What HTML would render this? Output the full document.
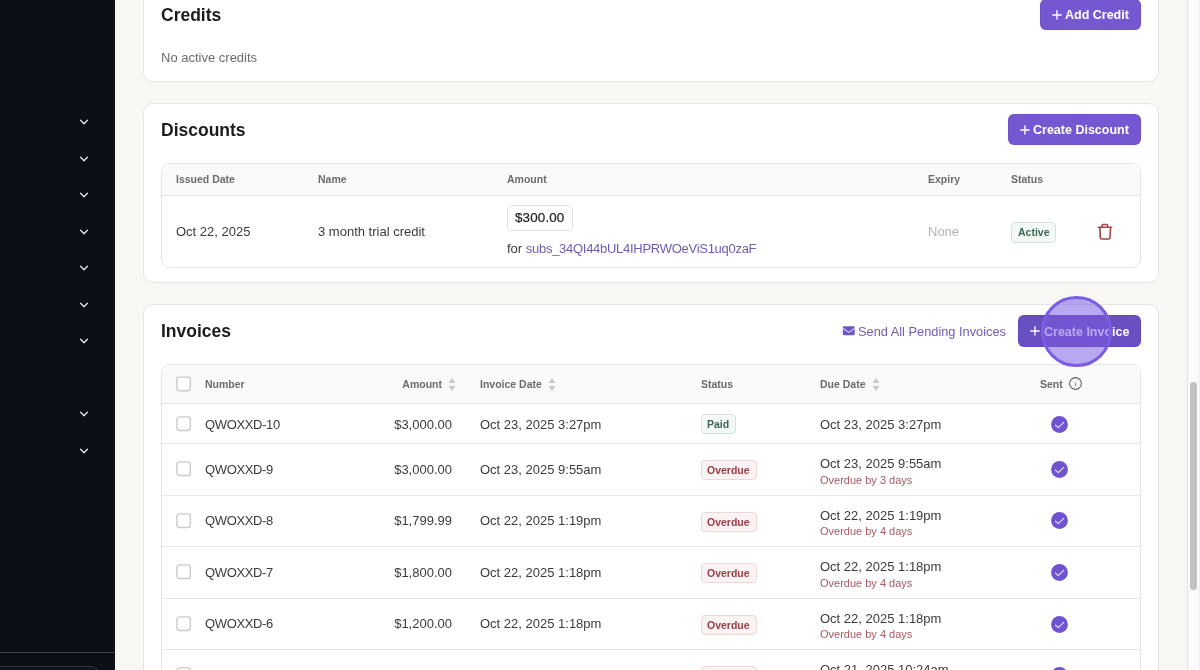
<!DOCTYPE html><html><head><meta charset="utf-8"><style>
*{box-sizing:border-box;margin:0;padding:0}
html,body{width:1200px;height:670px;overflow:hidden}
body{background:#f8f7f3;font-family:"Liberation Sans",sans-serif;position:relative}
#L{position:absolute;left:0;top:0;width:1200px;height:670px;will-change:transform}
.a{position:absolute}
.t{position:absolute;white-space:nowrap;line-height:20px}
.r13{font-size:13px;color:#3b3b3b}
.h{font-size:10.5px;font-weight:bold;color:#6b6b6b}
.ttl{font-size:17.5px;font-weight:bold;color:#1c1c1e}
.bt{font-size:12.5px;font-weight:bold;color:#fff}
.s11{font-size:11px;color:#a85a62}
.bd{font-size:10.5px;font-weight:bold}
.card{position:absolute;left:143px;width:1016px;background:#fff;border:1px solid #e6e5e1;border-radius:10px}
.tbl{position:absolute;left:161px;width:980px;border:1px solid #e5e5e5;border-radius:9px;overflow:hidden;background:#fff}
.btn{position:absolute;height:31px;background:#7558d1;border-radius:6px;box-shadow:inset 0 0 0 1px rgba(60,30,120,.1)}
.plus{position:absolute;width:9.4px;height:9.4px;margin:0.2px 0 0 0.4px}
.plus:before{content:"";position:absolute;left:3.95px;top:0;width:1.5px;height:9.4px;background:#fff}
.plus:after{content:"";position:absolute;left:0;top:3.95px;width:9.4px;height:1.5px;background:#fff}
.hl{position:absolute;height:1px;background:#e8e8e8}
.cb{position:absolute;left:176px;width:14.6px;height:14.6px;margin:-0.4px 0 0 0;border:1.5px solid #cbcbcb;border-radius:3px;background:#fff}
.badge{position:absolute;height:20.4px;border-radius:4px}
.green{background:#f2f9f6;border:1px solid #d8e1dc}
.red{background:#fbf3f3;border:1px solid #e9d9d9}
.gt{color:#3b6651}
.rt{color:#973f48}
.chev{position:absolute;left:79px;width:10px;height:6px}
</style></head><body><div id="L">
<div class="a" style="left:0;top:0;width:115px;height:670px;background:#0b0f17"></div>
<svg class="a" style="left:78px;top:118px" width="12" height="8" viewBox="0 0 12 8"><path d="M2.6 2.3 L6 5.7 L9.4 2.3" fill="none" stroke="#e8e8e8" stroke-width="1.3" stroke-linecap="round" stroke-linejoin="round"/></svg>
<svg class="a" style="left:78px;top:154.5px" width="12" height="8" viewBox="0 0 12 8"><path d="M2.6 2.3 L6 5.7 L9.4 2.3" fill="none" stroke="#e8e8e8" stroke-width="1.3" stroke-linecap="round" stroke-linejoin="round"/></svg>
<svg class="a" style="left:78px;top:191px" width="12" height="8" viewBox="0 0 12 8"><path d="M2.6 2.3 L6 5.7 L9.4 2.3" fill="none" stroke="#e8e8e8" stroke-width="1.3" stroke-linecap="round" stroke-linejoin="round"/></svg>
<svg class="a" style="left:78px;top:227.5px" width="12" height="8" viewBox="0 0 12 8"><path d="M2.6 2.3 L6 5.7 L9.4 2.3" fill="none" stroke="#e8e8e8" stroke-width="1.3" stroke-linecap="round" stroke-linejoin="round"/></svg>
<svg class="a" style="left:78px;top:264px" width="12" height="8" viewBox="0 0 12 8"><path d="M2.6 2.3 L6 5.7 L9.4 2.3" fill="none" stroke="#e8e8e8" stroke-width="1.3" stroke-linecap="round" stroke-linejoin="round"/></svg>
<svg class="a" style="left:78px;top:300.5px" width="12" height="8" viewBox="0 0 12 8"><path d="M2.6 2.3 L6 5.7 L9.4 2.3" fill="none" stroke="#e8e8e8" stroke-width="1.3" stroke-linecap="round" stroke-linejoin="round"/></svg>
<svg class="a" style="left:78px;top:337px" width="12" height="8" viewBox="0 0 12 8"><path d="M2.6 2.3 L6 5.7 L9.4 2.3" fill="none" stroke="#e8e8e8" stroke-width="1.3" stroke-linecap="round" stroke-linejoin="round"/></svg>
<svg class="a" style="left:78px;top:410px" width="12" height="8" viewBox="0 0 12 8"><path d="M2.6 2.3 L6 5.7 L9.4 2.3" fill="none" stroke="#e8e8e8" stroke-width="1.3" stroke-linecap="round" stroke-linejoin="round"/></svg>
<svg class="a" style="left:78px;top:446.5px" width="12" height="8" viewBox="0 0 12 8"><path d="M2.6 2.3 L6 5.7 L9.4 2.3" fill="none" stroke="#e8e8e8" stroke-width="1.3" stroke-linecap="round" stroke-linejoin="round"/></svg>
<div class="a" style="left:111px;top:0;width:4px;height:670px;background:#0f1013"></div>
<div class="a" style="left:0;top:652px;width:115px;height:1px;background:#3b3e46"></div>
<div class="a" style="left:-20px;top:666px;width:119px;height:30px;border:1px solid #33363e;border-radius:8px;background:#10131a"></div>
<div class="card" style="top:-40px;height:122px"></div>
<div class="t ttl" style="left:161px;top:5px;">Credits</div>
<div class="btn" style="left:1040px;top:-1px;width:101px"></div>
<svg class="a" style="left:1052px;top:10px" width="10" height="10" viewBox="0 0 10 10"><path d="M4.95 0.3 V9.6 M0.3 4.95 H9.6" stroke="#fff" stroke-width="1.35"/></svg>
<div class="t bt" style="left:1065px;top:5px;">Add Credit</div>
<div class="t r13" style="left:161px;top:48px;color:#6b6b6b">No active credits</div>
<div class="card" style="top:103px;height:180px"></div>
<div class="t ttl" style="left:161px;top:120px;">Discounts</div>
<div class="btn" style="left:1008px;top:114px;width:133px"></div>
<svg class="a" style="left:1020px;top:125px" width="10" height="10" viewBox="0 0 10 10"><path d="M4.95 0.3 V9.6 M0.3 4.95 H9.6" stroke="#fff" stroke-width="1.35"/></svg>
<div class="t bt" style="left:1033px;top:120px;">Create Discount</div>
<div class="tbl" style="top:163px;height:105px"><div class="a" style="left:0;top:0;width:100%;height:32px;background:#fafafa;border-bottom:1px solid #e8e8e8"></div></div>
<div class="t h" style="left:176px;top:169px;">Issued Date</div>
<div class="t h" style="left:318px;top:169px;">Name</div>
<div class="t h" style="left:507px;top:169px;">Amount</div>
<div class="t h" style="left:928px;top:169px;">Expiry</div>
<div class="t h" style="left:1011px;top:169px;">Status</div>
<div class="t r13" style="left:176px;top:222px;">Oct 22, 2025</div>
<div class="t r13" style="left:318px;top:222px;">3 month trial credit</div>
<div class="a" style="left:507px;top:205px;width:66px;height:26px;border:1px solid #e2e2e2;border-radius:5px"></div>
<div class="t r13" style="left:515px;top:208px;color:#222;-webkit-text-stroke:0.2px #222;font-size:13.4px;letter-spacing:0.15px">$300.00</div>
<div class="t r13" style="left:507px;top:239px;">for <span style="color:#705cb3;letter-spacing:-0.28px">subs_34QI44bUL4IHPRWOeViS1uq0zaF</span></div>
<div class="t r13" style="left:928px;top:222px;color:#b3b3b3">None</div>
<div class="badge green" style="left:1011px;top:222px;width:45px;height:20.5px"></div>
<div class="t bd gt" style="left:1018px;top:222px;">Active</div>
<svg class="a" style="left:1096px;top:222px" width="18" height="19" viewBox="0 0 18 19"><path d="M2.4 5.3 H15.5 M5.7 5.3 L6.3 3 Q6.5 2.5 7.1 2.5 H10.6 Q11.2 2.5 11.4 3 L12 5.3 M3.9 5.3 L4.2 15.4 Q4.3 17 5.9 17 H12.3 Q13.9 17 14 15.4 L14.6 5.3" fill="none" stroke="#9f4848" stroke-width="1.6" stroke-linecap="round" stroke-linejoin="round"/></svg>
<div class="card" style="top:304px;height:420px"></div>
<div class="t ttl" style="left:161px;top:321px;">Invoices</div>
<svg class="a" style="left:842px;top:326px" width="14" height="10" viewBox="0 0 14 10"><rect x="0.8" y="0.3" width="11.9" height="8.9" rx="1.3" fill="#6b55c2"/><path d="M0.9 2.3 L6.75 6.4 L12.6 2.3" fill="none" stroke="#d8cdfb" stroke-width="1.1"/></svg>
<div class="t r13" style="left:858px;top:322px;color:#705cb3;font-size:12.8px">Send All Pending Invoices</div>
<div class="btn" style="left:1018px;top:315px;width:123px;height:32px;background:#6a4fc3"></div>
<svg class="a" style="left:1030px;top:326px" width="10" height="10" viewBox="0 0 10 10"><path d="M4.95 0.3 V9.6 M0.3 4.95 H9.6" stroke="#fff" stroke-width="1.35"/></svg>
<div class="t bt" style="left:1044px;top:322px;">Create Invoice</div>
<div class="tbl" style="top:364px;height:400px"><div class="a" style="left:0;top:0;width:100%;height:39px;background:#fafafa;border-bottom:1px solid #e8e8e8"></div></div>
<svg class="a" style="left:176px;top:376px" width="15" height="16" viewBox="0 0 15 16"><rect x="0.9" y="1.1" width="13.4" height="13.6" rx="2.6" fill="#fff" stroke="#cacaca" stroke-width="1.4"/></svg>
<div class="t h" style="left:205px;top:374px;">Number</div>
<div class="t h" style="right:758px;top:374px;">Amount</div>
<div class="t h" style="left:480px;top:374px;">Invoice Date</div>
<div class="t h" style="left:701px;top:374px;">Status</div>
<div class="t h" style="left:820px;top:374px;">Due Date</div>
<div class="t h" style="left:1040px;top:374px;">Sent</div>
<svg class="a" style="left:448px;top:377px" width="8" height="15" viewBox="0 0 8 15"><path d="M4 1 L7.3 6 H0.7 Z M4 14 L7.3 9 H0.7 Z" fill="#c6c6c6"/></svg>
<svg class="a" style="left:548px;top:377px" width="8" height="15" viewBox="0 0 8 15"><path d="M4 1 L7.3 6 H0.7 Z M4 14 L7.3 9 H0.7 Z" fill="#c6c6c6"/></svg>
<svg class="a" style="left:872px;top:377px" width="8" height="15" viewBox="0 0 8 15"><path d="M4 1 L7.3 6 H0.7 Z M4 14 L7.3 9 H0.7 Z" fill="#c6c6c6"/></svg>
<svg class="a" style="left:1068px;top:376px" width="15" height="15" viewBox="0 0 15 15"><circle cx="7.5" cy="7.5" r="5.9" fill="none" stroke="#606060" stroke-width="1.1"/><path d="M7.5 6.6 V10" stroke="#8a8a8a" stroke-width="1.1"/><path d="M7.5 4.6 V5.6" stroke="#c0c0c0" stroke-width="0.9"/></svg>
<svg class="a" style="left:176px;top:416px" width="15" height="16" viewBox="0 0 15 16"><rect x="0.9" y="0.9" width="13.4" height="13.6" rx="2.6" fill="#fff" stroke="#cacaca" stroke-width="1.4"/></svg>
<div class="t r13" style="left:205px;top:415px;letter-spacing:-0.35px">QWOXXD-10</div>
<div class="t r13" style="right:748px;top:415px;">$3,000.00</div>
<div class="t r13" style="left:480px;top:415px;">Oct 23, 2025 3:27pm</div>
<div class="badge green" style="left:701px;top:414px;width:35px"></div>
<div class="t bd gt" style="left:707px;top:414px;">Paid</div>
<div class="t r13" style="left:820px;top:415px;">Oct 23, 2025 3:27pm</div>
<svg class="a" style="left:1051px;top:416px" width="17" height="17" viewBox="0 0 17 17"><circle cx="8.5" cy="8.5" r="8.4" fill="#6f53cf"/><path d="M4.4 9.1 L7.2 11.6 L12.7 6.3" fill="none" stroke="#ebe4ff" stroke-width="1.15" stroke-linecap="round" stroke-linejoin="round"/></svg>
<div class="hl" style="left:162px;width:978px;top:443px"></div>
<svg class="a" style="left:176px;top:461px" width="15" height="16" viewBox="0 0 15 16"><rect x="0.9" y="0.9" width="13.4" height="13.6" rx="2.6" fill="#fff" stroke="#cacaca" stroke-width="1.4"/></svg>
<div class="t r13" style="left:205px;top:460px;letter-spacing:-0.35px">QWOXXD-9</div>
<div class="t r13" style="right:748px;top:460px;">$3,000.00</div>
<div class="t r13" style="left:480px;top:460px;">Oct 23, 2025 9:55am</div>
<div class="badge red" style="left:701px;top:460px;width:56px"></div>
<div class="t bd rt" style="left:707px;top:460px;">Overdue</div>
<div class="t r13" style="left:820px;top:454px;">Oct 23, 2025 9:55am</div>
<div class="t s11" style="left:820px;top:470px;">Overdue by 3 days</div>
<svg class="a" style="left:1051px;top:461px" width="17" height="17" viewBox="0 0 17 17"><circle cx="8.5" cy="8.5" r="8.4" fill="#6f53cf"/><path d="M4.4 9.1 L7.2 11.6 L12.7 6.3" fill="none" stroke="#ebe4ff" stroke-width="1.15" stroke-linecap="round" stroke-linejoin="round"/></svg>
<div class="hl" style="left:162px;width:978px;top:495px"></div>
<svg class="a" style="left:176px;top:513px" width="15" height="16" viewBox="0 0 15 16"><rect x="0.9" y="0.9" width="13.4" height="13.6" rx="2.6" fill="#fff" stroke="#cacaca" stroke-width="1.4"/></svg>
<div class="t r13" style="left:205px;top:511px;letter-spacing:-0.35px">QWOXXD-8</div>
<div class="t r13" style="right:748px;top:511px;">$1,799.99</div>
<div class="t r13" style="left:480px;top:511px;">Oct 22, 2025 1:19pm</div>
<div class="badge red" style="left:701px;top:512px;width:56px"></div>
<div class="t bd rt" style="left:707px;top:512px;">Overdue</div>
<div class="t r13" style="left:820px;top:506px;">Oct 22, 2025 1:19pm</div>
<div class="t s11" style="left:820px;top:521px;">Overdue by 4 days</div>
<svg class="a" style="left:1051px;top:512px" width="17" height="17" viewBox="0 0 17 17"><circle cx="8.5" cy="8.5" r="8.4" fill="#6f53cf"/><path d="M4.4 9.1 L7.2 11.6 L12.7 6.3" fill="none" stroke="#ebe4ff" stroke-width="1.15" stroke-linecap="round" stroke-linejoin="round"/></svg>
<div class="hl" style="left:162px;width:978px;top:546px"></div>
<svg class="a" style="left:176px;top:564px" width="15" height="16" viewBox="0 0 15 16"><rect x="0.9" y="0.9" width="13.4" height="13.6" rx="2.6" fill="#fff" stroke="#cacaca" stroke-width="1.4"/></svg>
<div class="t r13" style="left:205px;top:563px;letter-spacing:-0.35px">QWOXXD-7</div>
<div class="t r13" style="right:748px;top:563px;">$1,800.00</div>
<div class="t r13" style="left:480px;top:563px;">Oct 22, 2025 1:18pm</div>
<div class="badge red" style="left:701px;top:563px;width:56px"></div>
<div class="t bd rt" style="left:707px;top:563px;">Overdue</div>
<div class="t r13" style="left:820px;top:557px;">Oct 22, 2025 1:18pm</div>
<div class="t s11" style="left:820px;top:573px;">Overdue by 4 days</div>
<svg class="a" style="left:1051px;top:564px" width="17" height="17" viewBox="0 0 17 17"><circle cx="8.5" cy="8.5" r="8.4" fill="#6f53cf"/><path d="M4.4 9.1 L7.2 11.6 L12.7 6.3" fill="none" stroke="#ebe4ff" stroke-width="1.15" stroke-linecap="round" stroke-linejoin="round"/></svg>
<div class="hl" style="left:162px;width:978px;top:598px"></div>
<svg class="a" style="left:176px;top:616px" width="15" height="16" viewBox="0 0 15 16"><rect x="0.9" y="0.9" width="13.4" height="13.6" rx="2.6" fill="#fff" stroke="#cacaca" stroke-width="1.4"/></svg>
<div class="t r13" style="left:205px;top:614px;letter-spacing:-0.35px">QWOXXD-6</div>
<div class="t r13" style="right:748px;top:614px;">$1,200.00</div>
<div class="t r13" style="left:480px;top:614px;">Oct 22, 2025 1:18pm</div>
<div class="badge red" style="left:701px;top:615px;width:56px"></div>
<div class="t bd rt" style="left:707px;top:615px;">Overdue</div>
<div class="t r13" style="left:820px;top:609px;">Oct 22, 2025 1:18pm</div>
<div class="t s11" style="left:820px;top:624px;">Overdue by 4 days</div>
<svg class="a" style="left:1051px;top:616px" width="17" height="17" viewBox="0 0 17 17"><circle cx="8.5" cy="8.5" r="8.4" fill="#6f53cf"/><path d="M4.4 9.1 L7.2 11.6 L12.7 6.3" fill="none" stroke="#ebe4ff" stroke-width="1.15" stroke-linecap="round" stroke-linejoin="round"/></svg>
<div class="hl" style="left:162px;width:978px;top:649px"></div>
<svg class="a" style="left:176px;top:667px" width="15" height="16" viewBox="0 0 15 16"><rect x="0.9" y="0.9" width="13.4" height="13.6" rx="2.6" fill="#fff" stroke="#cacaca" stroke-width="1.4"/></svg>
<div class="t r13" style="left:205px;top:666px;letter-spacing:-0.35px">QWOXXD-5</div>
<div class="t r13" style="right:748px;top:665px;">$1,000.00</div>
<div class="t r13" style="left:480px;top:666px;">Oct 21, 2025 10:24am</div>
<div class="badge red" style="left:701px;top:666px;width:56px"></div>
<div class="t bd rt" style="left:707px;top:666px;">Overdue</div>
<div class="t r13" style="left:820px;top:660px;">Oct 21, 2025 10:24am</div>
<div class="t s11" style="left:820px;top:676px;">Overdue by 5 days</div>
<svg class="a" style="left:1051px;top:667px" width="17" height="17" viewBox="0 0 17 17"><circle cx="8.5" cy="8.5" r="8.4" fill="#6f53cf"/><path d="M4.4 9.1 L7.2 11.6 L12.7 6.3" fill="none" stroke="#ebe4ff" stroke-width="1.15" stroke-linecap="round" stroke-linejoin="round"/></svg>
<div class="a" style="left:1041.3px;top:296.4px;width:70.6px;height:70.6px;border-radius:50%;background:rgba(123,91,227,0.53);border:3px solid #7a5de3"></div>
<div class="a" style="left:1187px;top:0;width:13px;height:670px;background:#fafafa;border-left:1px solid #e4e4e2;border-right:1px solid #eeeeec"></div>
<div class="a" style="left:1190px;top:382px;width:7px;height:208px;background:#c1c1c1;border-radius:3.5px;box-shadow:0 0 0 1px #fcfcfc"></div>
</div></body></html>
